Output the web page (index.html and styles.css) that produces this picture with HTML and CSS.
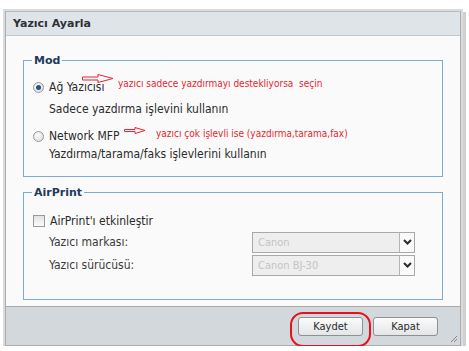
FILE: index.html
```html
<!DOCTYPE html>
<html lang="tr">
<head>
    <meta charset="UTF-8">
    <title>Yazıcı Ayarla</title>
    <link rel="stylesheet" href="styles.css">
</head>
<body>
    <div class="window">
        <div class="title-bar">Yazıcı Ayarla</div>

        <div class="content">
            <fieldset class="group mod-group">
                <legend>Mod</legend>
                <div class="option-row">
                    <span class="radio checked"></span>
                    <span>Ağ Yazıcısı</span>
                </div>
                <div class="option-desc first-desc">Sadece yazdırma işlevini kullanın</div>
                <div class="option-row second-row">
                    <span class="radio"></span>
                    <span>Network MFP</span>
                </div>
                <div class="option-desc second-desc">Yazdırma/tarama/faks işlevlerini kullanın</div>
            </fieldset>

            <fieldset class="group air-group">
                <legend>AirPrint</legend>
                <div class="option-row">
                    <span class="checkbox"></span>
                    <span>AirPrint'ı etkinleştir</span>
                </div>
                <div class="field-row brand-row">
                    <span class="field-label">Yazıcı markası:</span>
                    <div class="select">
                        <span class="select-value">Canon</span>
                        <span class="select-btn"><svg width="9" height="6" viewBox="0 0 9 6"><path d="M1 1 L4.5 4.5 L8 1" fill="none" stroke="#2a2a2a" stroke-width="2"/></svg></span>
                    </div>
                </div>
                <div class="field-row driver-row">
                    <span class="field-label">Yazıcı sürücüsü:</span>
                    <div class="select">
                        <span class="select-value">Canon BJ-30</span>
                        <span class="select-btn"><svg width="9" height="6" viewBox="0 0 9 6"><path d="M1 1 L4.5 4.5 L8 1" fill="none" stroke="#2a2a2a" stroke-width="2"/></svg></span>
                    </div>
                </div>
            </fieldset>
        </div>

        <div class="footer">
            <button class="btn">Kaydet</button>
            <button class="btn">Kapat</button>
            <svg class="grip" width="8" height="8" viewBox="0 0 8 8">
                <path d="M1 7 L7 1 M4 7 L7 4" stroke="#888" stroke-width="1"/>
            </svg>
        </div>

        <!-- annotations drawn over the dialog -->
        <svg class="arrow arrow-one" width="32" height="9" viewBox="0 0 32 9">
            <path d="M0.5 3 H16 V0.5 L31 4.5 L16 8.5 V6 H0.5 Z" fill="none" stroke="#e8242e" stroke-width="1"/>
        </svg>
        <span class="note note-one">yazıcı sadece yazdırmayı destekliyorsa&nbsp; seçin</span>
        <svg class="arrow arrow-two" width="22" height="7" viewBox="0 0 22 7">
            <path d="M0.5 2.5 H11 V0.5 L21 3.5 L11 6.5 V4.5 H0.5 Z" fill="none" stroke="#e8242e" stroke-width="1"/>
        </svg>
        <span class="note note-two">yazıcı çok işlevli ise (yazdırma,tarama,fax)</span>
        <div class="ring"></div>
    </div>
</body>
</html>
```

FILE: styles.css
```css
body {
    margin: 0;
    background: #ffffff;
    font-family: "DejaVu Sans Condensed", "DejaVu Sans", sans-serif;
    font-size: 12px;
    color: #2b2b2b;
}
.window {
    position: relative;
    margin: 11px 0 0 5px;
    width: 454px;
    border: 1px solid #a9adb0;
    border-top-color: #b8bcbf;
    box-shadow: 0 0 0 2px #dcdcdc, 3px 3px 0 2px #d0d0d0;
    background: #fafafa;
}
.title-bar {
    height: 23px;
    line-height: 23px;
    padding-left: 7px;
    background: #dfe4e8;
    border-bottom: 1px solid #c3c8cc;
    font-family: "DejaVu Sans", sans-serif;
    font-weight: bold;
    font-size: 11px;
    color: #2d3136;
}
.content {
    height: 252px;
    padding: 18px 17px 0 17px;
}
.group {
    margin: 0;
    padding: 0 0 0 9px;
    border: 1px solid #7eaad2;
}
.group legend {
    padding: 0 2px;
    margin-left: -1px;
    font-family: "DejaVu Sans", sans-serif;
    font-weight: bold;
    font-size: 11px;
    color: #1e3a5c;
}
.mod-group {
    height: 108px;
    padding-top: 13px;
}
.air-group {
    margin-top: 9px;
    height: 97px;
    padding-top: 15px;
}
.option-row {
    display: flex;
    align-items: center;
    gap: 5px;
    height: 14px;
}
.second-row {
    margin-top: 13px;
}
.option-desc {
    margin-left: 16px;
    height: 14px;
    line-height: 14px;
}
.first-desc {
    margin-top: 8px;
}
.second-desc {
    margin-top: 4px;
}
.radio {
    width: 9px;
    height: 9px;
    border: 1px solid #9a9a9a;
    border-radius: 50%;
    background: radial-gradient(circle at 40% 40%, #ffffff, #d4d4d4);
    display: flex;
    align-items: center;
    justify-content: center;
}
.radio.checked::after {
    content: "";
    width: 5px;
    height: 5px;
    border-radius: 50%;
    background: #2a4f86;
}
.checkbox {
    width: 10px;
    height: 10px;
    border: 1px solid #9a9a9a;
    background: linear-gradient(#e2e2e2, #fbfbfb);
}
.field-row {
    display: flex;
    align-items: center;
    height: 20px;
    padding-left: 16px;
}
.brand-row {
    margin-top: 4px;
}
.driver-row {
    margin-top: 3px;
}
.field-label {
    width: 203px;
    color: #3a3a3a;
}
.select {
    display: flex;
    width: 161px;
    height: 19px;
    border: 1px solid #a9a9a9;
    background: #eeeeee;
}
.select-value {
    flex: 1;
    padding-left: 5px;
    line-height: 19px;
    font-size: 11px;
    color: #c4c4c4;
}
.select-btn {
    width: 14px;
    border-left: 1px solid #b5b5b5;
    background: #fafafa;
    display: flex;
    align-items: center;
    justify-content: center;
}
.footer {
    position: relative;
    height: 38px;
    border-top: 1px solid #a9a9a9;
    background: #d3d8dc;
    display: flex;
    justify-content: flex-end;
    align-items: center;
    gap: 10px;
    padding-right: 22px;
}
.btn {
    width: 65px;
    height: 19px;
    padding: 0;
    border: 1px solid #8e9194;
    border-radius: 3px;
    background: linear-gradient(#fbfbfb, #e3e5e7);
    font-family: "DejaVu Sans Condensed", "DejaVu Sans", sans-serif;
    font-size: 11px;
    color: #2b2b2b;
}
.grip {
    position: absolute;
    right: 2px;
    bottom: 2px;
}
.arrow {
    position: absolute;
}
.arrow-one {
    left: 76px;
    top: 62px;
}
.arrow-two {
    left: 118px;
    top: 115px;
}
.note {
    position: absolute;
    font-size: 10px;
    color: #e8242e;
    white-space: nowrap;
}
.note-one {
    left: 112px;
    top: 66px;
}
.note-two {
    left: 150px;
    top: 116px;
}
.ring {
    position: absolute;
    left: 284px;
    top: 300px;
    width: 77px;
    height: 31px;
    border: 2px solid #e8101c;
    border-radius: 13px;
}
```
